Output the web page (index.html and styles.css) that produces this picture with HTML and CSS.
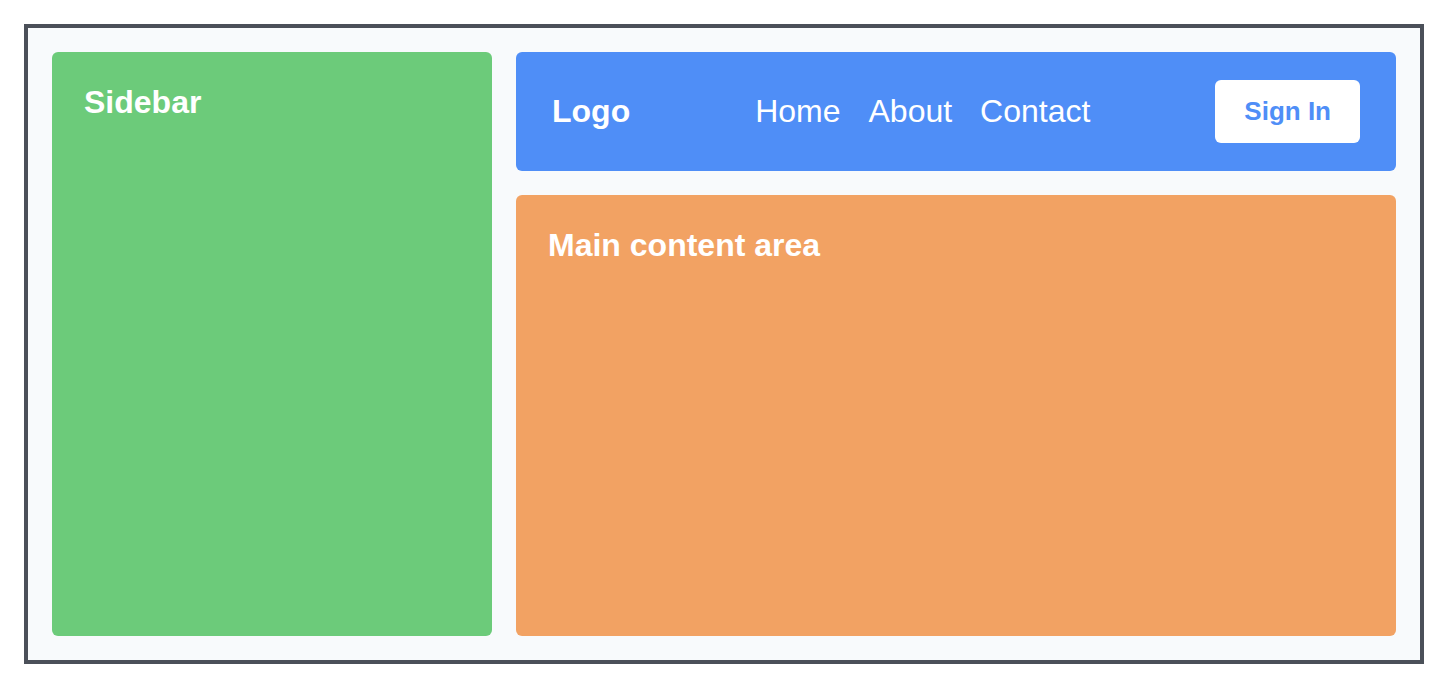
FILE: index.html
```html
<!DOCTYPE html>
<html lang="en">
  <head>
    <meta charset="UTF-8" />
    <meta name="viewport" content="width=device-width, initial-scale=1.0" />
    <title>Layout Demo</title>
    <link rel="stylesheet" href="styles.css">
  </head>

  <body>
    <div class="layout">
      <aside class="sidebar">
        <h2 class="panel-title">Sidebar</h2>
      </aside>

      <div class="right-column">
        <header class="header">
          <div class="logo">Logo</div>
          <nav class="nav">
            <a href="#">Home</a>
            <a href="#">About</a>
            <a href="#">Contact</a>
          </nav>
          <button class="sign-in">Sign In</button>
        </header>

        <main class="main">
          <h2 class="panel-title">Main content area</h2>
        </main>
      </div>
    </div>
  </body>
</html>
```

FILE: styles.css
```css
* {
  box-sizing: border-box;
}

body {
  margin: 0;
  padding: 24px;
  font-family: "Liberation Sans", Arial, sans-serif;
  background-color: #ffffff;
}

.layout {
  display: flex;
  gap: 24px;
  height: 640px;
  padding: 24px;
  border: 4px solid #4b5059;
  background-color: #f8fafc;
}

.sidebar {
  flex: 0 0 440px;
  padding: 32px;
  border-radius: 6px;
  background-color: #6ccb7a;
}

.right-column {
  flex: 1;
  display: flex;
  flex-direction: column;
  gap: 24px;
}

.panel-title {
  margin: 0;
  color: white;
  font-size: 32px;
  font-weight: bold;
}

.header {
  display: flex;
  align-items: center;
  justify-content: space-between;
  padding: 28px 36px;
  border-radius: 6px;
  background-color: #4f8ef7;
}

.logo {
  color: white;
  font-size: 32px;
  font-weight: bold;
}

.nav {
  display: flex;
  gap: 28px;
}

.nav a {
  color: white;
  font-size: 32px;
  text-decoration: none;
}

.sign-in {
  padding: 16px 29px;
  border: none;
  border-radius: 6px;
  background: white;
  color: #4f8ef7;
  font-family: inherit;
  font-size: 26px;
  font-weight: bold;
  line-height: 31px;
  cursor: pointer;
}

.main {
  flex: 1;
  padding: 32px;
  border-radius: 6px;
  background-color: #f2a263;
}
```
